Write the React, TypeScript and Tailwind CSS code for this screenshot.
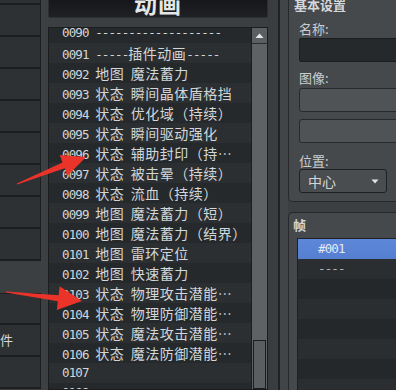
import React from "react";

const rows: string[] = [
  "0090 -------------------",
  "0091 -----插件动画-----",
  "0092 地图 魔法蓄力",
  "0093 状态 瞬间晶体盾格挡",
  "0094 状态 优化域（持续）",
  "0095 状态 瞬间驱动强化",
  "0096 状态 辅助封印（持…",
  "0097 状态 被击晕（持续）",
  "0098 状态 流血（持续）",
  "0099 地图 魔法蓄力（短）",
  "0100 地图 魔法蓄力（结界）",
  "0101 地图 雷环定位",
  "0102 地图 快速蓄力",
  "0103 状态 物理攻击潜能…",
  "0104 状态 物理防御潜能…",
  "0105 状态 魔法攻击潜能…",
  "0106 状态 魔法防御潜能…",
  "0107",
  "0108",
];

function Mixed({ text }: { text: string }) {
  const parts: { s: string; cjk: boolean }[] = [];
  for (const ch of text) {
    const cjk = ch.charCodeAt(0) > 0x7f;
    const last = parts[parts.length - 1];
    if (last && last.cjk === cjk) last.s += ch;
    else parts.push({ s: ch, cjk });
  }
  return (
    <>
      {parts.map((p, i) =>
        p.cjk ? (
          <span
            key={i}
            className="text-[14px] tracking-[0.5px]"
            style={{ fontFamily: '"Noto Sans CJK SC", sans-serif' }}
          >
            {p.s}
          </span>
        ) : (
          <span key={i}>{p.s}</span>
        )
      )}
    </>
  );
}

function LeftButton({ label, topBorder }: { label?: string; topBorder?: boolean }) {
  return (
    <div
      className={
        "h-[32px] w-[41px] shrink-0 bg-[#2e3134] border-r border-b-2 border-[#1c1e20] flex items-center overflow-hidden " +
        (topBorder ? "border-t" : "")
      }
    >
      {label ? <span className="text-[13px] text-[#d6d8da]">{label}</span> : null}
    </div>
  );
}

export default function App() {
  const cjk = { fontFamily: '"Noto Sans CJK SC", sans-serif' };
  const mono = { fontFamily: '"DejaVu Sans Mono", "Noto Sans CJK SC", monospace' };
  return (
    <div className="relative w-[396px] h-[390px] overflow-hidden bg-[#3c3f42] flex" style={cjk}>
      {/* left button column */}
      <div className="w-[41px] shrink-0 flex flex-col -mt-[27px]">
        {Array.from({ length: 9 }).map((_, i) => (
          <LeftButton key={i} />
        ))}
        <div className="h-[32px] shrink-0 bg-[#3c3f42]" />
        <LeftButton topBorder />
        <LeftButton label="件" />
        <LeftButton />
      </div>
      <div className="w-[7px] shrink-0 bg-[#3d4043]" />

      {/* middle panel */}
      <div className="w-[220px] shrink-0 flex flex-col">
        <div className="h-[18px] shrink-0 rounded-b-[2px] bg-gradient-to-b from-[#15171a] to-[#1f2124] border-x border-b border-[#2c2f32] flex justify-center overflow-hidden">
          <span className="-mt-[10px] text-[23px] leading-[26px] font-bold text-[#e4e6e8] tracking-[1px]">
            动画
          </span>
        </div>
        <div className="h-[9px] shrink-0" />
        <div className="flex-1 min-h-0 border border-[#1b1d1f] flex overflow-hidden">
          <div className="flex-1 min-w-0 overflow-hidden">
            <div className="-mt-[5px]">
              {rows.map((r, i) => (
                <div
                  key={i}
                  className={
                    "h-[20px] leading-[20px] pl-[13px] whitespace-nowrap overflow-hidden text-[12.5px] tracking-[-0.9px] text-[#d2d7da] " +
                    (i % 2 === 1 ? "bg-[#2c2f31]" : "bg-[#26292b]")
                  }
                  style={mono}
                >
                  <Mixed text={r} />
                </div>
              ))}
            </div>
          </div>
          <div className="w-[16px] shrink-0 border-l border-[#1b1d1f] bg-[#5e6265] flex flex-col">
            <div className="h-[16px] shrink-0 bg-[#5b5f62] border-b border-[#2a2c2e] flex items-center justify-center">
              <svg width="9" height="6" viewBox="0 0 9 6">
                <path d="M4.5 0.5 L8.5 5 L0.5 5 Z" fill="#e6e8ea" />
              </svg>
            </div>
            <div className="flex-1" />
            <div className="h-[49px] shrink-0 mx-[1px] border border-[#1b1d1f] bg-[#5a5e61]" />
          </div>
        </div>
      </div>

      {/* separator zone */}
      <div className="w-[10px] shrink-0 bg-[#3a3d40]" />
      <div className="w-[2px] shrink-0 bg-[#1f2123]" />
      <div className="w-[8px] shrink-0 bg-[#424548]" />

      {/* right panel */}
      <div className="flex-1 min-w-0 flex flex-col overflow-hidden">
        <div className="shrink-0 border-l border-b border-[#26282a] rounded-bl-[5px] bg-[#46494c] pl-[10px] pb-[8px] flex flex-col">
          <div className="h-[21px] shrink-0 -ml-[5px]">
            <div className="-mt-[3px] text-[13px] leading-[16px] font-bold text-[#d4d7d9] whitespace-nowrap">
              基本设置
            </div>
          </div>
          <div className="h-[16px] text-[13px] leading-[16px] text-[#c9cdcf] whitespace-nowrap">名称:</div>
          <div className="mt-[1px] h-[24px] w-[140px] shrink-0 rounded-[2px] bg-[#26292b] border border-[#1b1d1f]" />
          <div className="mt-[8px] h-[16px] text-[13px] leading-[16px] text-[#c9cdcf] whitespace-nowrap">图像:</div>
          <div className="mt-[2px] h-[24px] w-[140px] shrink-0 rounded-[3px] bg-[#505356] border border-[#27292b]" />
          <div className="mt-[7px] h-[24px] w-[140px] shrink-0 rounded-[3px] bg-[#505356] border border-[#27292b]" />
          <div className="mt-[10px] h-[16px] text-[13px] leading-[16px] text-[#c9cdcf] whitespace-nowrap">位置:</div>
          <div className="h-[24px] w-[88px] shrink-0 rounded-[3px] bg-[#4a4d50] border border-[#1e2022] flex items-center pl-[8px] pr-[7px]">
            <span className="flex-1 text-[14px] text-[#d2d5d7]">中心</span>
            <svg width="8" height="5" viewBox="0 0 8 5">
              <path d="M0.5 0.5 L7.5 0.5 L4 4.5 Z" fill="#e2e4e6" />
            </svg>
          </div>
        </div>

        <div className="mt-[10px] flex-1 min-h-0 border-l border-t border-[#26282a] rounded-tl-[5px] bg-[#46494c] pl-[8px] pt-[4px] flex flex-col">
          <div className="h-[16px] shrink-0 -ml-[4px] text-[13px] leading-[16px] font-bold text-[#d4d7d9]">帧</div>
          <div className="mt-[5px] flex-1 min-h-0 border-l border-t border-[#1e2022] overflow-hidden">
            <div
              className="h-[20px] leading-[20px] pl-[20px] bg-gradient-to-b from-[#5d87d9] to-[#5580d2] text-[12.5px] tracking-[-0.9px] text-[#e3e9f5]"
              style={mono}
            >
              #001
            </div>
            {Array.from({ length: 7 }).map((_, i) => (
              <div
                key={i}
                className={
                  "h-[20px] leading-[20px] pl-[20px] text-[12.5px] tracking-[-0.9px] text-[#b4b8bb] " +
                  (i % 2 === 0 ? "bg-[#2b2e30]" : "bg-[#25282a]")
                }
                style={mono}
              >
                {i === 0 ? "----" : ""}
              </div>
            ))}
          </div>
        </div>
      </div>

      {/* red annotation arrows */}
      <svg className="absolute inset-0 pointer-events-none" width="396" height="390" viewBox="0 0 396 390">
        <polygon
          points="16.8,183.4 62.5,162.6 59.7,155.1 86,157 67.5,175.7 64.7,168.2 17.2,184.6"
          fill="#ea3329"
        />
        <polygon
          points="6.1,291.4 58.6,295.2 59.6,286.3 82,301 56.8,310.1 57.8,301.2 5.9,292.6"
          fill="#ea3329"
        />
      </svg>
    </div>
  );
}
